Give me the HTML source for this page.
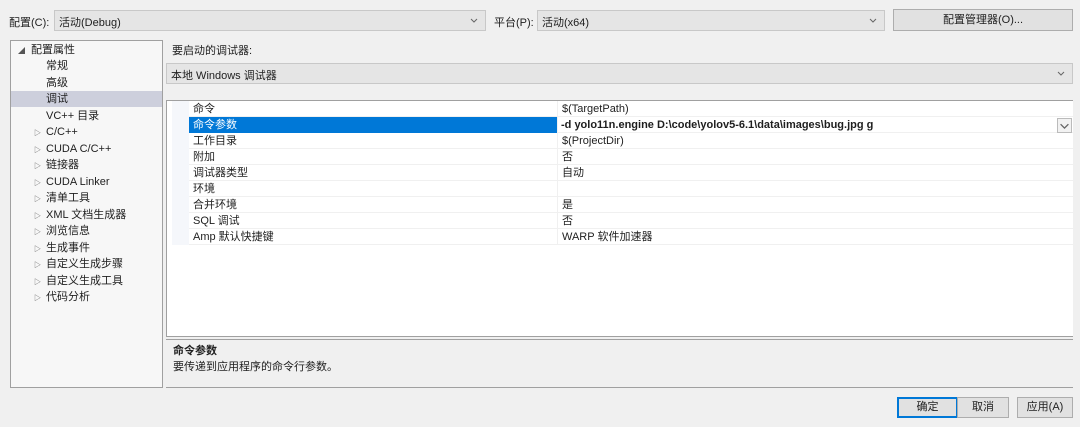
<!DOCTYPE html>
<html><head><meta charset="utf-8"><style>
*{box-sizing:border-box;margin:0;padding:0}
body{width:1080px;height:427px;background:#f0f0f0;font-family:"Liberation Sans","Noto Sans CJK SC",sans-serif;font-size:11px;color:#1e1e1e;position:relative;overflow:hidden}
.a{position:absolute;white-space:nowrap}
.combo{position:absolute;background:#e5e5e5;border:1px solid #c8c8c8}
.combo span{position:absolute;left:4px;top:3px}
.chev{position:absolute;right:6px;top:4px;width:10px;height:10px}
.btn{position:absolute;background:#e1e1e1;border:1px solid #adadad;text-align:center;line-height:19px}
.tree div{position:absolute;left:0;white-space:nowrap;height:16px;line-height:16px}
.tri{position:absolute;font-size:7px;color:#555}
.row{position:absolute;left:22px;right:0;height:16px;line-height:16px;border-bottom:1px solid #f0f0f0}
.row .k{position:absolute;left:4px}
.row .v{position:absolute;left:373px}
</style></head><body>
<div class="a" style="left:9px;top:14px">配置(C):</div>
<div class="combo" style="left:54px;top:10px;width:432px;height:21px"><span>活动(Debug)</span><svg class="chev" viewBox="0 0 10 10"><path d="M2 4l3 3 3-3" stroke="#666" fill="none"/></svg></div>
<div class="a" style="left:494px;top:14px">平台(P):</div>
<div class="combo" style="left:537px;top:10px;width:348px;height:21px"><span>活动(x64)</span><svg class="chev" viewBox="0 0 10 10"><path d="M2 4l3 3 3-3" stroke="#666" fill="none"/></svg></div>
<div class="btn" style="left:893px;top:9px;width:180px;height:22px;line-height:20px">配置管理器(O)...</div>

<div class="a tree" style="left:10px;top:40px;width:153px;height:348px;background:#f7f7f7;border:1px solid #a0a0a0">
<span class="tri" style="left:7px;top:5px">◢</span><div style="left:20px;top:1px">配置属性</div>
<div style="left:35px;top:17px">常规</div>
<div style="left:35px;top:34px">高级</div>
<div style="left:0;top:50px;width:151px;background:#cdcfdc;padding-left:35px">调试</div>
<div style="left:35px;top:67px">VC++ 目录</div>
<span class="tri" style="left:23px;top:87px">▷</span><div style="left:35px;top:83px">C/C++</div>
<span class="tri" style="left:23px;top:104px">▷</span><div style="left:35px;top:100px">CUDA C/C++</div>
<span class="tri" style="left:23px;top:120px">▷</span><div style="left:35px;top:116px">链接器</div>
<span class="tri" style="left:23px;top:137px">▷</span><div style="left:35px;top:133px">CUDA Linker</div>
<span class="tri" style="left:23px;top:153px">▷</span><div style="left:35px;top:149px">清单工具</div>
<span class="tri" style="left:23px;top:170px">▷</span><div style="left:35px;top:166px">XML 文档生成器</div>
<span class="tri" style="left:23px;top:186px">▷</span><div style="left:35px;top:182px">浏览信息</div>
<span class="tri" style="left:23px;top:203px">▷</span><div style="left:35px;top:199px">生成事件</div>
<span class="tri" style="left:23px;top:219px">▷</span><div style="left:35px;top:215px">自定义生成步骤</div>
<span class="tri" style="left:23px;top:236px">▷</span><div style="left:35px;top:232px">自定义生成工具</div>
<span class="tri" style="left:23px;top:252px">▷</span><div style="left:35px;top:248px">代码分析</div>
</div>

<div class="a" style="left:172px;top:42px">要启动的调试器:</div>
<div class="combo" style="left:166px;top:63px;width:907px;height:21px"><span>本地 Windows 调试器</span><svg class="chev" viewBox="0 0 10 10"><path d="M2 4l3 3 3-3" stroke="#666" fill="none"/></svg></div>

<div class="a" style="left:166px;top:100px;width:907px;height:237px;background:#fff;border:1px solid #a0a0a0;border-right:0">
<div style="position:absolute;left:5px;top:0;width:17px;height:144px;background:#f5f7fb"></div>
<div class="row" style="top:0"><span class="k">命令</span><span class="v">$(TargetPath)</span></div>
<div class="row" style="top:16px"><div style="position:absolute;left:0;width:369px;height:16px;background:#0078d7"></div><span class="k" style="color:#fff">命令参数</span><span class="v" style="font-weight:bold;left:372px">-d yolo11n.engine D:\code\yolov5-6.1\data\images\bug.jpg g</span><div style="position:absolute;right:1px;top:1px;width:15px;height:15px;border:1px solid #bbb;background:#f2f2f2"><svg viewBox="0 0 10 10" width="13" height="13"><path d="M2 4l3 3 3-3" stroke="#666" fill="none"/></svg></div></div>
<div class="row" style="top:32px"><span class="k">工作目录</span><span class="v">$(ProjectDir)</span></div>
<div class="row" style="top:48px"><span class="k">附加</span><span class="v">否</span></div>
<div class="row" style="top:64px"><span class="k">调试器类型</span><span class="v">自动</span></div>
<div class="row" style="top:80px"><span class="k">环境</span><span class="v"></span></div>
<div class="row" style="top:96px"><span class="k">合并环境</span><span class="v">是</span></div>
<div class="row" style="top:112px"><span class="k">SQL 调试</span><span class="v">否</span></div>
<div class="row" style="top:128px"><span class="k">Amp 默认快捷键</span><span class="v">WARP 软件加速器</span></div>
<div style="position:absolute;left:390px;top:0;width:1px;height:144px;background:#f0f0f0"></div>
</div>
<div class="a" style="left:166px;top:336px;width:907px;height:1px;background:#a0a0a0"></div>

<div class="a" style="left:166px;top:339px;width:907px;height:49px;border-top:1px solid #a0a0a0;border-bottom:1px solid #a0a0a0"></div>
<div class="a" style="left:173px;top:342px;font-weight:bold">命令参数</div>
<div class="a" style="left:173px;top:358px">要传递到应用程序的命令行参数。</div>

<div class="btn" style="left:897px;top:397px;width:61px;height:21px;border:2px solid #0078d7;line-height:17px">确定</div>
<div class="btn" style="left:957px;top:397px;width:52px;height:21px">取消</div>
<div class="btn" style="left:1017px;top:397px;width:56px;height:21px">应用(A)</div>
</body></html>
